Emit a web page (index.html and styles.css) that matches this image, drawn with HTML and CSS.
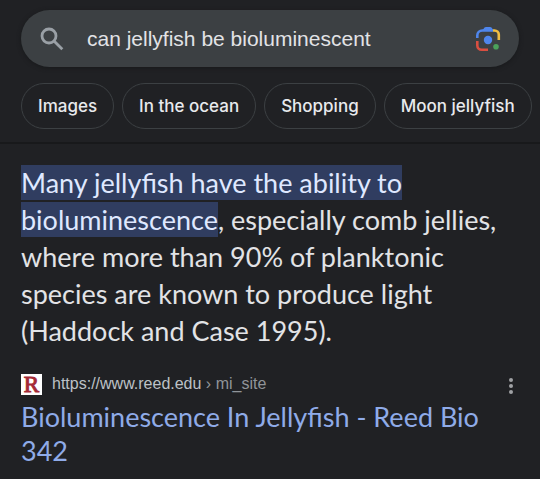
FILE: index.html
```html
<!DOCTYPE html>
<html lang="en">
<head>
<meta charset="utf-8">
<meta name="viewport" content="width=device-width, initial-scale=1">
<title>can jellyfish be bioluminescent</title>
<link rel="stylesheet" href="styles.css">
</head>
<body>
<header class="top">
  <form class="search" role="search">
    <button class="icon-button" type="submit" aria-label="Search">
      <svg width="24" height="24" viewBox="0 0 24 24" fill="none" stroke="#9aa0a6" stroke-width="2.800">
        <circle cx="9" cy="9" r="7"/>
        <path d="M14 14l8.300 8.300"/>
      </svg>
    </button>
    <input class="query" type="text" aria-label="Search query" value="can jellyfish be bioluminescent">
    <button class="icon-button" type="button" aria-label="Search by image">
      <svg width="26" height="26" viewBox="0 0 26 26" fill="none" stroke-width="2.600">
        <path d="M2.300 12V9.500a5 5 0 0 1 5-5H18" stroke="#4f86ec"/>
        <path d="M7 5L9.500 1.500Q10 1 11 1h4q1 0 1.500.5L19 5z" fill="#4f86ec"/>
        <path d="M18 4.500h1.500a4.300 4.300 0 0 1 4.300 4.300V14" stroke="#f0bd42"/>
        <path d="M2.300 15v4.500a4.300 4.300 0 0 0 4.300 4.300H13" stroke="#d94f41"/>
        <circle cx="13" cy="14" r="4.200" fill="#4f86ec"/>
        <circle cx="21" cy="20.800" r="2.800" fill="#4ba15b"/>
      </svg>
    </button>
  </form>
  <nav class="chips" aria-label="Related searches">
    <a class="chip" href="#">Images</a>
    <a class="chip" href="#">In the ocean</a>
    <a class="chip" href="#">Shopping</a>
    <a class="chip" href="#">Moon jellyfish</a>
  </nav>
</header>
<main class="result">
  <p class="snippet"><mark class="highlight">Many jellyfish have the ability to bioluminescence</mark>, especially comb jellies, where more than 90% of planktonic species are known to produce light (Haddock and Case 1995).</p>
  <div class="source">
    <span class="favicon">R</span>
    <cite class="address">https://www.reed.edu <span class="crumb">› mi_site</span></cite>
    <button class="more" type="button" aria-label="More options">
      <svg width="6" height="16" viewBox="0 0 6 16" fill="#9fa1a4">
        <circle cx="3" cy="2" r="2"/>
        <circle cx="3" cy="8" r="2"/>
        <circle cx="3" cy="14" r="2"/>
      </svg>
    </button>
  </div>
  <h1 class="title"><a href="#">Bioluminescence In Jellyfish - Reed Bio 342</a></h1>
</main>
</body>
</html>
```
FILE: styles.css
```css
* {
  box-sizing: border-box;
}

body {
  margin: 0;
  background: #202124;
  color: #e2e3e6;
  font-family: Lato, "Liberation Sans", sans-serif;
}

button {
  padding: 0;
  border: 0;
  background: none;
}

svg {
  display: block;
}

.top {
  padding: 10px 0 13px 21px;
  border-bottom: 2px solid #18191b;
}

.search {
  display: flex;
  align-items: center;
  height: 57px;
  margin-right: 21px;
  padding: 0 18px 0 19px;
  border-radius: 29px;
  background: #3c4043;
  box-shadow: 0 1px 4px #18191b;
}

.query {
  flex: 1;
  min-width: 0;
  margin: 0 16px 0 23px;
  padding: 0;
  border: 0;
  outline: 0;
  background: none;
  color: #e2e3e6;
  font: 21px "Liberation Sans", sans-serif;
}

.chips {
  display: flex;
  gap: 8px;
  margin-top: 16px;
  overflow: hidden;
}

.chip {
  flex: none;
  padding: 0 16px;
  border: 1px solid #3c4043;
  border-radius: 23px;
  color: #e8eaed;
  font-family: Inter, sans-serif;
  font-size: 17px;
  font-weight: 500;
  line-height: 44px;
  text-decoration: none;
}

.result {
  padding: 20px 20px 12px 21px;
}

.snippet {
  margin: 0;
  font-size: 27px;
  line-height: 37px;
}

.highlight {
  padding: 1px 0;
  background: #303d60;
  color: #dfe8ff;
}

.source {
  display: flex;
  align-items: center;
  height: 22px;
  margin-top: 24px;
}

.favicon {
  width: 21px;
  background: #fff;
  color: #a52a37;
  font: 23px/21px "Liberation Serif", serif;
  text-align: center;
  -webkit-text-stroke: 1px #a52a37;
}

.address {
  flex: 1;
  margin-left: 10px;
  color: #bdc1c6;
  font: 16px "Liberation Sans", sans-serif;
}

.crumb {
  color: #909499;
}

.more {
  padding: 4px 6px 0;
}

.title {
  margin: 5px 0 0;
  font-size: 27px;
  font-weight: 400;
  line-height: 34px;
}

.title a {
  color: #8fabe8;
  text-decoration: none;
}
```
